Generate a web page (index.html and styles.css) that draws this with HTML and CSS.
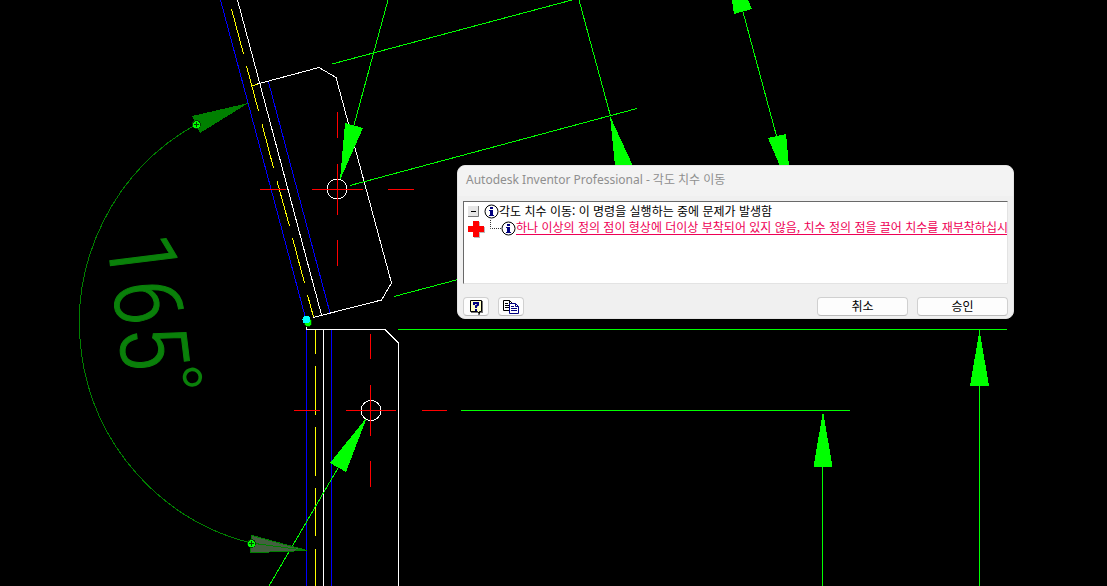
FILE: index.html
```
<!DOCTYPE html>
<html lang="ko">
<head>
<meta charset="utf-8">
<title>Autodesk Inventor Professional</title>
<link rel="stylesheet" href="styles.css">
</head>
<body>
<main class="workspace">
  <svg class="drawing" width="1107" height="586" viewBox="0 0 1107 586" role="img" aria-label="도면">
    <g class="blue">
      <path d="M220.5 0L305.5 318M268.500 82L330 313M306.500 330V586M331.500 330V586"/>
    </g>
    <g class="yellow">
      <path d="M231.500 9L243.500 54M246.500 66L258.500 111M262 124L273.500 168M277 181L289.500 226M292.500 238L304.500 283M307.500 295L313.500 317M252 86L258 84M315.500 330V354M315.500 366V415M315.500 427V476M315.500 488V536M315.500 549V586"/>
    </g>
    <g class="white">
      <path d="M237.500 0L321.500 315M257.500 84L319 67.500L336 77.500L391.500 283L381.500 300L313 317.500M306.500 326V329.500H385L398.500 343V586M323.500 330V586"/>
      <circle cx="337" cy="189" r="10"/>
      <circle cx="371" cy="410.500" r="10"/>
    </g>
    <g class="red">
      <path d="M260 189.500H286M312 189.500H363M388 189.500H414M337.500 112V138M337.500 164V215M337.500 240V266M294 410.500H320M346 410.500H396M422 410.500H447M370.500 334V359M370.500 385V436M370.500 461V487"/>
    </g>
    <g class="green">
      <path d="M388 0L354 125M332 64L572 0M350 185.500L637 108.500M394 296.500L460 279M579 0L610.500 116M743 12L776.500 136M338 468L269 586M461 410.500H850M398 329.500H1007M822.500 466V586M979.500 385V586"/>
      <path class="solid" d="M340 180L345 123L363 128ZM610 116L615 166H633ZM732 0L734 14L752 9L748 0ZM768 138L786 134L789 166H780ZM367 417L330 463L346 472ZM823 411L813.500 467H832.500ZM979.500 330L970 386H989Z"/>
    </g>
    <g class="dimension">
      <path d="M196 124.500A227 227 0 0 0 251 543"/>
      <path class="arrow" d="M248.500 103L192 116L200 133Z"/>
      <path class="arrow ghost" d="M307 550.500L252 535.500L250.500 552.500L270 552Z"/>
      <path d="M251 543L307 550.500"/>
      <g class="label" transform="translate(107 238) rotate(83)"><text>165</text></g>
      <g class="label degree" transform="translate(143 368) rotate(83)"><text>°</text></g>
    </g>
    <g class="handles">
      <circle cx="196.500" cy="124.500" r="4"/>
      <circle cx="251.500" cy="543.500" r="4"/>
      <circle cx="308" cy="322.500" r="4"/>
      <path d="M194 124.500H199M196.500 122V127M249 543.500H254M251.500 541V546"/>
      <circle class="origin" cx="306.500" cy="319.500" r="4"/>
    </g>
  </svg>

  <section class="dialog" role="dialog" aria-labelledby="dialog-title">
    <h1 class="title" id="dialog-title">Autodesk Inventor Professional - 각도 치수 이동</h1>
    <div class="messages">
      <div class="row">
        <button class="toggle" aria-label="접기"><svg width="11" height="11" viewBox="0 0 11 11"><path fill="#e6e6e6" d="M0 0H11V11H0Z"/><path fill="none" stroke="#777" d="M0 10.500H10.500V0"/><path stroke="#000" d="M3 5.500H8"/></svg></button>
        <svg class="info" width="15" height="15" viewBox="0 0 15 15"><circle cx="7.500" cy="7.500" r="6.500" fill="#fff" stroke="#000"/><path fill="#000080" d="M6 3H9V5H6ZM5 6H9V11H10V12H5V11H6V7H5Z"/></svg>
        <span>각도 치수 이동: 이 명령을 실행하는 중에 문제가 발생함</span>
      </div>
      <div class="row child">
        <svg class="cross" width="17" height="17" viewBox="0 0 17 17"><path fill="#bbb" d="M6 1H12V6H17V12H12V17H6Z"/><path fill="#f00" d="M5 0H11V5H16V11H11V16H5V11H0V5H5Z"/></svg>
        <svg class="branch" width="11" height="15" viewBox="0 0 11 15"><path fill="none" stroke="#333" stroke-dasharray="1 1" d="M.5 0V8.500H11"/></svg>
        <svg class="info" width="15" height="15" viewBox="0 0 15 15"><circle cx="7.500" cy="7.500" r="6.500" fill="#fff" stroke="#000"/><path fill="#000080" d="M6 3H9V5H6ZM5 6H9V11H10V12H5V11H6V7H5Z"/></svg>
        <a class="error" href="#">하나 이상의 정의 점이 형상에 더이상 부착되어 있지 않음, 치수 정의 점을 끌어 치수를 재부착하십시</a>
      </div>
    </div>
    <div class="actions">
      <button class="tool" aria-label="도움말"><svg width="16" height="16" viewBox="0 0 16 16"><path fill="#777" d="M3 2H15V14H12V16H10V14H3Z"/><path fill="#ffffc8" stroke="#000" d="M2.500 1.500H13.500V12.500H11.500V14.500L9.500 12.500H2.500Z"/><path fill="none" stroke="#000080" stroke-width="2" d="M6 6V4H10V6L8 7V9M8 10V12"/></svg></button>
      <button class="tool" aria-label="복사"><svg width="16" height="16" viewBox="0 0 16 16"><path fill="#fff" stroke="#000" d="M.5 1.500H6.500L9.500 4.500V11.500H.5ZM6.500 1.500V4.500H9.500M2 4.500H5M2 6.500H8M2 8.500H8"/><path fill="#fff" stroke="#000080" d="M6.500 4.500H12.500L15.500 7.500V14.500H6.500ZM12.500 4.500V7.500H15.500M8 7.500H11M8 9.500H14M8 11.500H14"/></svg></button>
      <button class="command cancel">취소</button>
      <button class="command">승인</button>
    </div>
  </section>
</main>
</body>
</html>
```
FILE: styles.css
```
* { box-sizing: border-box; }
body { margin: 0; background: #000; font: 12px/16px "Noto Sans CJK KR", sans-serif; }
.workspace { position: relative; min-height: 100vh; overflow: hidden; background: #000; }
.drawing { display: block; shape-rendering: crispEdges; fill: none; }
.blue { stroke: #00f; }
.yellow { stroke: #ff0; }
.white { stroke: #fff; }
.red { stroke: #f00; }
.green { stroke: #0f0; }
.green .solid { fill: #0f0; stroke: none; }
.dimension { stroke: #008000; }
.arrow { fill: #008000; stroke: none; }
.ghost { fill: #445f40; stroke: #008000; }
.label { fill: #0a800a; stroke: none; font-family: "Liberation Sans Narrow", "Roboto Condensed", Roboto, sans-serif; font-size: 94px; font-weight: 300; }
.label:not(.degree) { stroke: #0a800a; stroke-width: 1px; }
.degree { font-size: 80px; }
.handles { fill: #0f0; stroke: #004000; }
.handles .origin { fill: #0ff; stroke: none; }

.dialog {
  position: absolute;
  left: 457px;
  top: 165px;
  width: 557px;
  border-radius: 8px;
  background: #f0f0f0;
  border: 1px solid #e4e4e4;
  padding: 0 5px 2px;
  overflow: hidden;
}
.title { margin: 0 -5px 5px; padding: 4px 8px 6px; font: 12px/20px "Noto Sans", "Noto Sans CJK KR", sans-serif; color: #8f8f8f; background: #f3f3f3; }
.messages { height: 83px; padding: 1px 0 0 4px; background: #fff; border: 1px solid; border-color: #696969 #e3e3e3 #e3e3e3 #696969; white-space: nowrap; overflow: hidden; }
.row { display: flex; align-items: center; height: 16px; }
.toggle { display: flex; padding: 0; border: 0; margin-right: 5px; }
.info { flex: none; }
.cross { margin: 4px 5px 0 0; flex: none; }
.branch { flex: none; }
.child .info { margin-top: 2px; }
.error { color: #ee0055; text-decoration: underline; text-underline-offset: 2px; }
.actions { display: flex; gap: 9px; padding-top: 13px; }
.actions button { height: 19px; padding: 0; border: 1px solid #d0d0d0; border-bottom-color: #bbb; border-radius: 4px; background: #fdfdfd; color: #000; font: 12px/16px "Noto Sans CJK KR", sans-serif; }
.actions .tool { width: 26px; display: flex; align-items: center; justify-content: center; }
.actions .command { width: 91px; padding-bottom: 2px; }
.cancel { margin-left: auto; }
```
